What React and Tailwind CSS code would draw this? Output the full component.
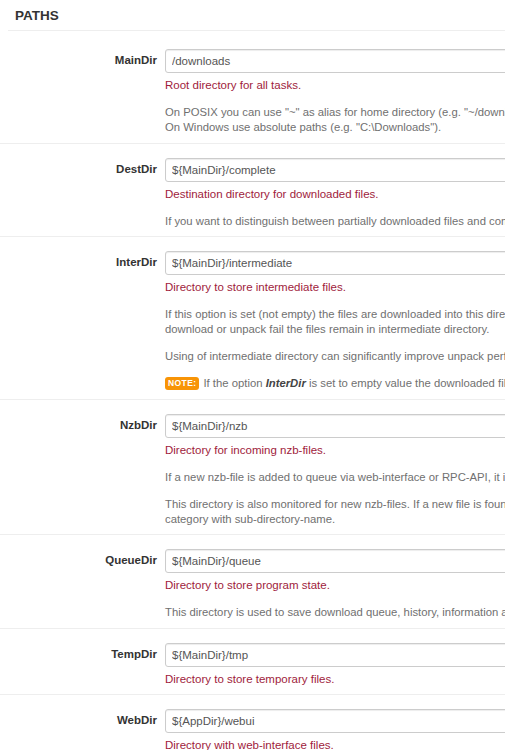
import React from 'react'

const rows = [
  {
    name: 'MainDir',
    value: '/downloads',
    title: 'Root directory for all tasks.',
    paras: [
      ['On POSIX you can use "~" as alias for home directory (e.g. "~/downloads").', 'On Windows use absolute paths (e.g. "C:\\Downloads").'],
    ],
  },
  {
    name: 'DestDir',
    value: '${MainDir}/complete',
    title: 'Destination directory for downloaded files.',
    paras: [
      ['If you want to distinguish between partially downloaded files and completed files, use also option InterDir.'],
    ],
  },
  {
    name: 'InterDir',
    value: '${MainDir}/intermediate',
    title: 'Directory to store intermediate files.',
    paras: [
      ['If this option is set (not empty) the files are downloaded into this directory first. After successful download of nzb-file (possibly after par-repair) the files are moved to destination directory (option DestDir). If', 'download or unpack fail the files remain in intermediate directory.'],
      ['Using of intermediate directory can significantly improve unpack performance if you can put intermediate directory (option InterDir) and destination directory (option DestDir) on separate physical hard drives.'],
    ],
    note: true,
  },
  {
    name: 'NzbDir',
    value: '${MainDir}/nzb',
    title: 'Directory for incoming nzb-files.',
    paras: [
      ['If a new nzb-file is added to queue via web-interface or RPC-API, it is saved into this directory and then processed by pre-processing script (option ScanScript).'],
      ['This directory is also monitored for new nzb-files. If a new file is found it is added to download queue. The directory can have sub-directories. A nzb-file queued from a subdirectory is automatically assigned to', 'category with sub-directory-name.'],
    ],
  },
  {
    name: 'QueueDir',
    value: '${MainDir}/queue',
    title: 'Directory to store program state.',
    paras: [
      ['This directory is used to save download queue, history, information about fetched RSS feeds, statistics, etc.'],
    ],
  },
  {
    name: 'TempDir',
    value: '${MainDir}/tmp',
    title: 'Directory to store temporary files.',
    paras: [],
  },
  {
    name: 'WebDir',
    value: '${AppDir}/webui',
    title: 'Directory with web-interface files.',
    paras: [],
  },
]

function OptionRow({ row, first }) {
  return (
    <div className={first ? 'pt-[18px] pb-[7.5px] pl-2' : 'border-t border-[#eeeeee] pt-[14px] pb-[7.5px] pl-2'}>
      <div className="flex">
        <div className="w-[149px] shrink-0 h-6 flex items-center justify-end font-bold text-[#333333] text-[11.5px]">
          {row.name}
        </div>
        <div className="ml-2 flex-1">
          <input
            readOnly
            value={row.value}
            className="w-[700px] h-6 border border-[#cccccc] rounded-l-[3px] px-[6px] text-[11.5px] text-[#555555] bg-white shadow-[inset_0_1px_1px_rgba(0,0,0,0.075)] outline-none font-['Liberation_Sans',Arial,sans-serif]"
          />
          <div className="mt-[5px] leading-[15px] text-[#a01c3c] whitespace-nowrap">{row.title}</div>
          {row.paras.map((p, i) => (
            <div key={i} className="mt-[12px] leading-[15px] text-[11.3px] text-[#707070] whitespace-nowrap">
              {p.map((line, j) => (
                <div key={j}>{line}</div>
              ))}
            </div>
          ))}
          {row.note && (
            <div className="mt-[12px] leading-[15px] text-[11.3px] text-[#707070] whitespace-nowrap flex items-center">
              <span className="inline-block bg-[#f89406] text-white font-bold text-[8.5px] leading-[13px] px-[3px] rounded-[3px] tracking-[0.4px] mr-[4px]">NOTE:</span>
              <span>
                If the option <b className="italic text-[#444444]">InterDir</b> is set to empty value the downloaded files are put directly to destination directory (option DestDir).
              </span>
            </div>
          )}
        </div>
      </div>
    </div>
  )
}

export default function App() {
  return (
    <div className="w-[505px] h-[750px] overflow-hidden bg-white font-['Liberation_Sans',Arial,sans-serif] text-[11.5px]">
      <div className="w-[900px]">
        <div className="ml-2 h-[31px] border-b border-[#eeeeee] flex items-center">
          <h2 className="pl-[7px] pt-[3px] text-[13.5px] font-bold text-[#333333]">PATHS</h2>
        </div>
        {rows.map((row, i) => (
          <OptionRow key={row.name} row={row} first={i === 0} />
        ))}
      </div>
    </div>
  )
}
